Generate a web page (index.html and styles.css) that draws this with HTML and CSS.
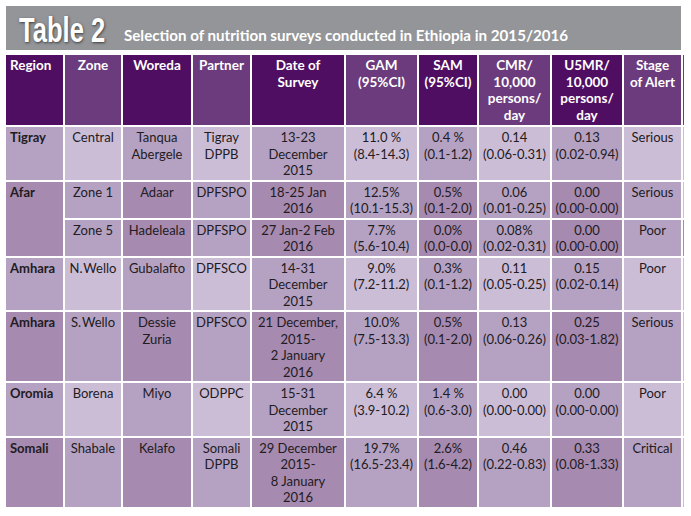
FILE: index.html
```html
<!DOCTYPE html>
<html lang="en">
<head>
<meta charset="utf-8">
<title>Table 2</title>
<link rel="stylesheet" href="styles.css">
</head>
<body>
<div class="page">
  <div class="titlebar">
    <span class="tnum"><span class="tnum-text">Table 2</span></span>
    <span class="tsub">Selection of nutrition surveys conducted in Ethiopia in 2015/2016</span>
  </div>
  <table class="data">
    <colgroup>
      <col class="w-region"><col class="w-zone"><col class="w-woreda"><col class="w-partner"><col class="w-date">
      <col class="w-gam"><col class="w-sam"><col class="w-cmr"><col class="w-u5"><col class="w-stage"><col class="w-edge">
    </colgroup>
    <thead>
      <tr>
        <th class="reg">Region</th>
        <th>Zone</th>
        <th>Woreda</th>
        <th>Partner</th>
        <th>Date of<br>Survey</th>
        <th>GAM<br>(95%CI)</th>
        <th>SAM<br>(95%CI)</th>
        <th>CMR/<br>10,000<br>persons/<br>day</th>
        <th>U5MR/<br>10,000<br>persons/<br>day</th>
        <th>Stage<br>of Alert</th>
        <th class="edge"></th>
      </tr>
    </thead>
    <tbody>
      <tr class="lt">
        <td class="reg">Tigray</td>
        <td>Central</td>
        <td>Tanqua<br>Abergele</td>
        <td>Tigray<br>DPPB</td>
        <td>13-23<br>December<br>2015</td>
        <td>11.0 %<br>(8.4-14.3)</td>
        <td>0.4 %<br>(0.1-1.2)</td>
        <td>0.14<br>(0.06-0.31)</td>
        <td>0.13<br>(0.02-0.94)</td>
        <td>Serious</td>
        <td class="edge"></td>
      </tr>
      <tr class="dk">
        <td class="reg" rowspan="2">Afar</td>
        <td>Zone 1</td>
        <td>Adaar</td>
        <td>DPFSPO</td>
        <td>18-25 Jan<br>2016</td>
        <td>12.5%<br>(10.1-15.3)</td>
        <td>0.5%<br>(0.1-2.0)</td>
        <td>0.06<br>(0.01-0.25)</td>
        <td>0.00<br>(0.00-0.00)</td>
        <td>Serious</td>
        <td class="edge"></td>
      </tr>
      <tr class="dk shift">
        <td>Zone 5</td>
        <td>Hadeleala</td>
        <td>DPFSPO</td>
        <td>27 Jan-2 Feb<br>2016</td>
        <td>7.7%<br>(5.6-10.4)</td>
        <td>0.0%<br>(0.0-0.0)</td>
        <td>0.08%<br>(0.02-0.31)</td>
        <td>0.00<br>(0.00-0.00)</td>
        <td>Poor</td>
        <td class="edge"></td>
      </tr>
      <tr class="lt">
        <td class="reg">Amhara</td>
        <td>N.&#8202;Wello</td>
        <td>Gubalafto</td>
        <td>DPFSCO</td>
        <td>14-31<br>December<br>2015</td>
        <td>9.0%<br>(7.2-11.2)</td>
        <td>0.3%<br>(0.1-1.2)</td>
        <td>0.11<br>(0.05-0.25)</td>
        <td>0.15<br>(0.02-0.14)</td>
        <td>Poor</td>
        <td class="edge"></td>
      </tr>
      <tr class="dk">
        <td class="reg">Amhara</td>
        <td>S.&#8202;Wello</td>
        <td>Dessie<br>Zuria</td>
        <td>DPFSCO</td>
        <td>21 December,<br>2015-<br>2 January<br>2016</td>
        <td>10.0%<br>(7.5-13.3)</td>
        <td>0.5%<br>(0.1-2.0)</td>
        <td>0.13<br>(0.06-0.26)</td>
        <td>0.25<br>(0.03-1.82)</td>
        <td>Serious</td>
        <td class="edge"></td>
      </tr>
      <tr class="lt">
        <td class="reg">Oromia</td>
        <td>Borena</td>
        <td>Miyo</td>
        <td>ODPPC</td>
        <td>15-31<br>December<br>2015</td>
        <td>6.4 %<br>(3.9-10.2)</td>
        <td>1.4 %<br>(0.6-3.0)</td>
        <td>0.00<br>(0.00-0.00)</td>
        <td>0.00<br>(0.00-0.00)</td>
        <td>Poor</td>
        <td class="edge"></td>
      </tr>
      <tr class="dk">
        <td class="reg">Somali</td>
        <td>Shabale</td>
        <td>Kelafo</td>
        <td>Somali<br>DPPB</td>
        <td>29 December<br>2015-<br>8 January<br>2016</td>
        <td>19.7%<br>(16.5-23.4)</td>
        <td>2.6%<br>(1.6-4.2)</td>
        <td>0.46<br>(0.22-0.83)</td>
        <td>0.33<br>(0.08-1.33)</td>
        <td>Critical</td>
        <td class="edge"></td>
      </tr>
    </tbody>
  </table>
</div>
</body>
</html>
```

FILE: styles.css
```css
html, body {
  margin: 0;
  padding: 0;
  background: #ffffff;
}

.page {
  padding: 6px 0 0 6px;
  width: 685px;
}

.titlebar {
  display: flex;
  align-items: flex-start;
  width: 675px;
  height: 44px;
  background: #939598;
  padding-left: 13px;
  box-sizing: border-box;
}

.tnum {
  flex: 0 0 105px;
  width: 105px;
  margin-top: 4px;
  white-space: nowrap;
}

.tnum-text {
  display: inline-block;
  font-family: "Liberation Sans", "Arial", sans-serif;
  font-weight: bold;
  font-size: 35px;
  line-height: 40px;
  color: #ffffff;
  text-shadow: 1px 1px 3px rgba(30, 30, 30, 0.75);
  transform: scaleX(0.73);
  transform-origin: 0 50%;
}

.tsub {
  margin-top: 20px;
  font-family: "Lato", "Open Sans", sans-serif;
  font-weight: bold;
  font-size: 15.15px;
  line-height: 18px;
  color: #ffffff;
  white-space: nowrap;
}

.data {
  margin: 3px 0 0 -2px;
  border-collapse: separate;
  border-spacing: 2px;
  table-layout: fixed;
  width: 682px;
  font-family: "Lato", "Open Sans", sans-serif;
  font-size: 13px;
  line-height: 16.5px;
  color: #221b1f;
}

.w-region { width: 57px; }
.w-zone { width: 56px; }
.w-woreda { width: 68px; }
.w-partner { width: 57px; }
.w-date { width: 92px; }
.w-gam { width: 71px; }
.w-sam { width: 58px; }
.w-cmr { width: 71px; }
.w-u5 { width: 70px; }
.w-stage { width: 57px; }
.w-edge { width: 1px; }

.data th,
.data td {
  box-sizing: border-box;
  padding: 2px 0 1px;
  text-align: center;
  vertical-align: top;
  white-space: nowrap;
}

.data th {
  height: 70px;
  font-size: 13.5px;
  font-weight: bold;
  color: #ffffff;
}

.data th:nth-child(odd) { background: #500e63; }
.data th:nth-child(even) { background: #6b3b7e; }

.data .reg {
  text-align: left;
  padding-left: 4px;
}

.data td.reg {
  font-weight: bold;
}

/* light rows: medium / light alternating columns */
.lt td:nth-child(odd) { background: #b5a2c2; }
.lt td:nth-child(even) { background: #ccbdd7; }

/* darker rows: dark / medium alternating columns */
.dk td:nth-child(odd) { background: #a68aaf; }
.dk td:nth-child(even) { background: #b5a2c2; }

/* row that starts at the second column because of a rowspan */
.dk.shift td:nth-child(odd) { background: #b5a2c2; }
.dk.shift td:nth-child(even) { background: #a68aaf; }

.data .edge {
  padding: 0;
}
.data th.edge { background: #6b3b7e; }
.data td.edge { background: #ccbdd7; }
```
